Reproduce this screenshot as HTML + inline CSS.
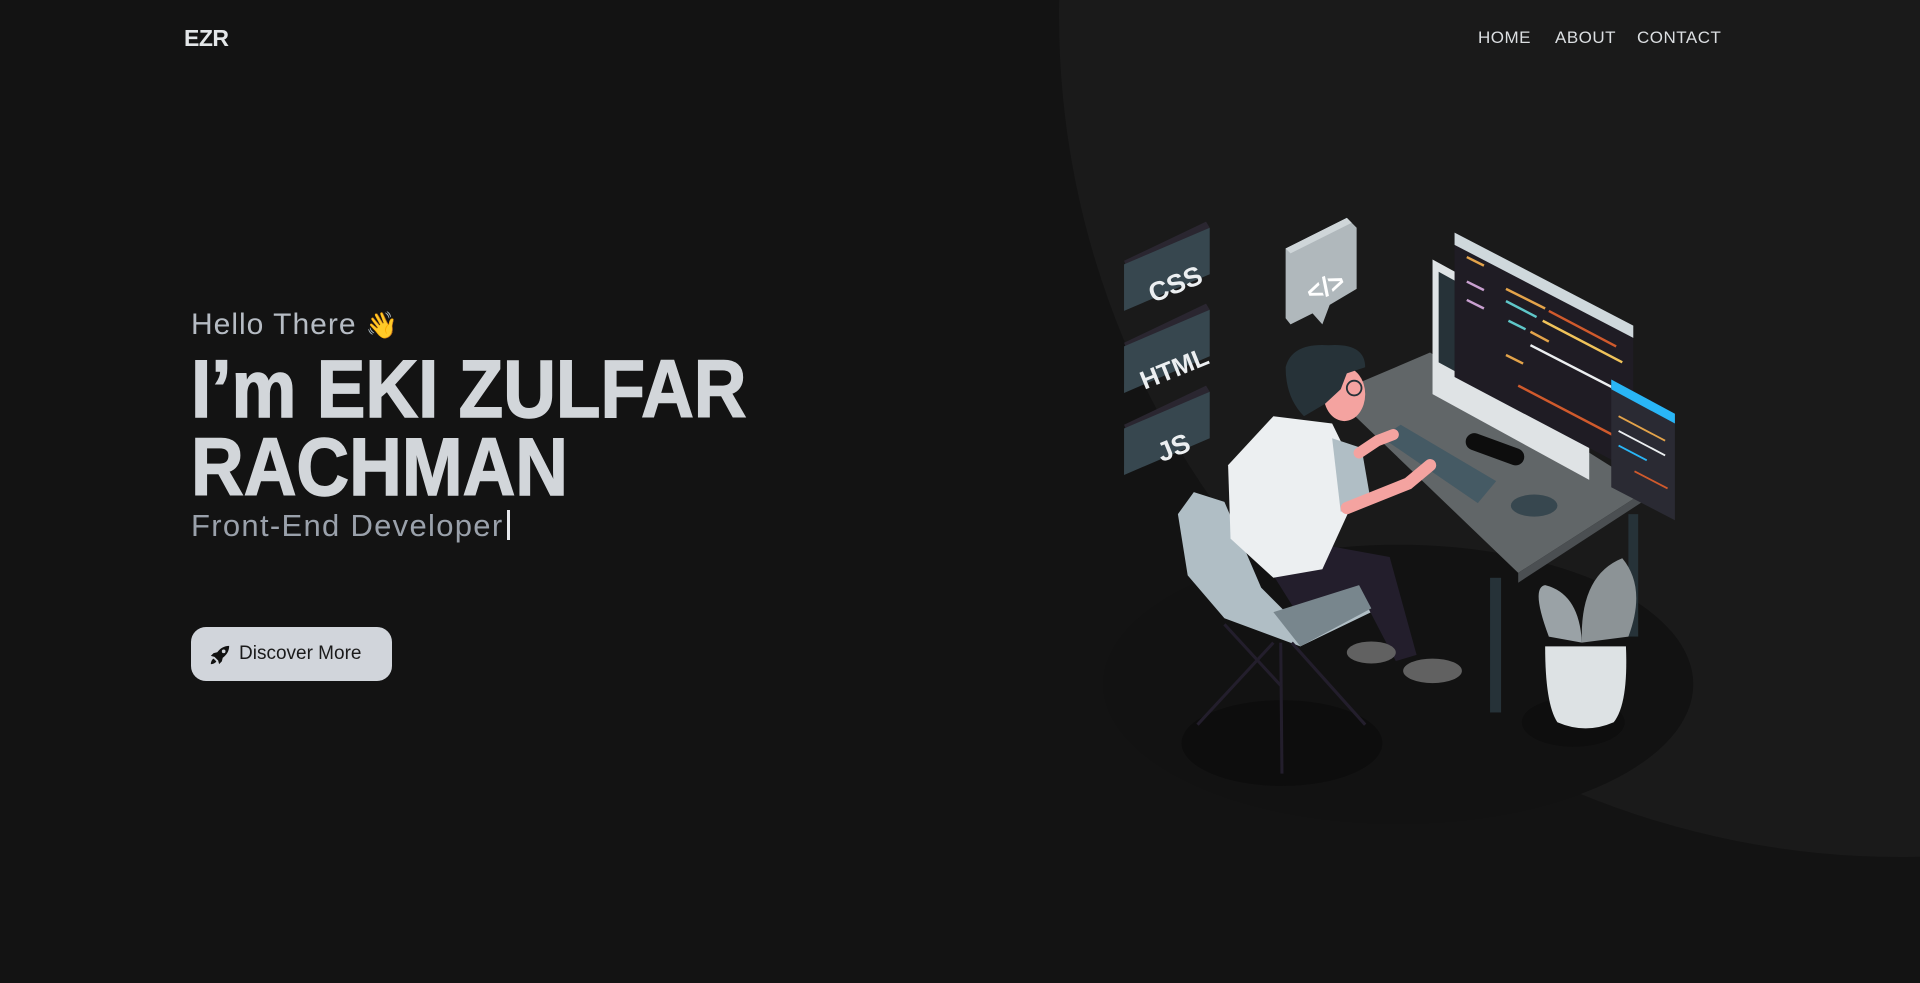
<!DOCTYPE html>
<html><head><meta charset="utf-8"><style>
html,body{margin:0;padding:0;width:1920px;height:983px;overflow:hidden;background:#131313;font-family:"Liberation Sans",sans-serif}
.circle{position:absolute;left:1059px;top:-825px;width:1682px;height:1682px;border-radius:50%;background:#1a1a1a}
svg.art{position:absolute;left:0;top:0}
.logo{position:absolute;left:184px;top:25px;font-size:23px;font-weight:bold;color:#e3e6e8;letter-spacing:-0.5px}
.nav{position:absolute;top:28px;font-size:17px;color:#dcdfe2;letter-spacing:0.5px}
.hello{position:absolute;left:191px;top:308px;font-size:30px;color:#b6bcc4;white-space:nowrap;letter-spacing:1px}
.h1{position:absolute;left:191px;font-size:82px;font-weight:bold;color:#d2d6da;white-space:nowrap;transform-origin:0 0;transform:scaleX(0.89);line-height:1;-webkit-text-stroke:1.5px #d2d6da}
.role{position:absolute;left:191px;top:508px;font-size:31px;color:#9aa1ab;white-space:nowrap;letter-spacing:1.3px}
.cursor{display:inline-block;width:3px;height:30px;background:#e5e7eb;vertical-align:-4px;margin-left:4px}
.btn{position:absolute;left:191px;top:627px;width:201px;height:54px;border-radius:15px;background:#d1d5db;color:#1b1b1b;font-size:19px;line-height:54px}
.btn span{position:absolute;left:48px}
</style></head><body>
<div class="circle"></div>
<svg class="art" width="1920" height="983" viewBox="0 0 1568 803">
<ellipse cx="1142" cy="559" rx="241" ry="114" fill="#121212"/>
<ellipse cx="1047" cy="607" rx="82" ry="35" fill="#0d0d0d"/>
<ellipse cx="1285" cy="590" rx="42" ry="20" fill="#0e0e0e"/>
<g>
<polygon points="918,213 985,181 988,186 920,218" fill="#2a2630"/>
<polygon points="918,216 988,186 988,224 918,254" fill="#37474f"/>
<text x="936" y="242" transform="rotate(-22 953 230)" fill="#eceff1" font-weight="bold" font-size="22" font-family="Liberation Sans">CSS</text>
<polygon points="918,280 985,248 988,253 920,285" fill="#2a2630"/>
<polygon points="918,283 988,253 988,291 918,321" fill="#37474f"/>
<text x="928" y="310" transform="rotate(-22 953 297)" fill="#eceff1" font-weight="bold" font-size="21" font-family="Liberation Sans">HTML</text>
<polygon points="918,347 985,315 988,320 920,352" fill="#2a2630"/>
<polygon points="918,350 988,320 988,358 918,388" fill="#37474f"/>
<text x="944" y="375" transform="rotate(-22 953 364)" fill="#eceff1" font-weight="bold" font-size="22" font-family="Liberation Sans">JS</text>
</g>
<polygon points="1050,203 1100,178 1108,186 1108,236 1086,249 1080,265 1072,256 1054,265 1050,260" fill="#b0b8bc"/>
<polygon points="1050,203 1100,178 1104,182 1054,207" fill="#cfd6d9"/>
<text x="1064" y="243" transform="rotate(-22 1078 228)" fill="#fff" font-weight="bold" font-size="22" font-family="Liberation Sans">&lt;/&gt;</text>
<polygon points="1088,322 1168,288 1346,400 1240,468" fill="#616668"/>
<polygon points="1240,468 1346,400 1346,407 1240,476" fill="#4b4f52"/>
<rect x="1217" y="472" width="9" height="110" fill="#263238"/>
<rect x="1330" y="420" width="8" height="100" fill="#263238"/>
<polygon points="1170,212 1298,282 1298,392 1170,322" fill="#dfe3e5"/>
<polygon points="1175,222 1293,287 1293,360 1175,296" fill="#263238"/>
<polygon points="1188,190 1334,266 1334,385 1188,308" fill="#1f1c24"/>
<polygon points="1188,190 1334,266 1334,276 1188,200" fill="#cfd8dc"/>
<g stroke-width="2">
<line x1="1230" y1="236" x2="1262" y2="252" stroke="#e3a34a"/><line x1="1265" y1="254" x2="1320" y2="283" stroke="#d05a2c"/>
<line x1="1230" y1="246" x2="1255" y2="259" stroke="#5fc7c9"/><line x1="1260" y1="262" x2="1325" y2="296" stroke="#f0c35a"/>
<line x1="1232" y1="262" x2="1246" y2="269" stroke="#5fc7c9"/><line x1="1250" y1="271" x2="1265" y2="279" stroke="#e3a34a"/>
<line x1="1250" y1="282" x2="1320" y2="318" stroke="#eceff1"/>
<line x1="1230" y1="290" x2="1244" y2="297" stroke="#e3a34a"/><line x1="1240" y1="315" x2="1330" y2="362" stroke="#d05a2c"/>
<line x1="1198" y1="210" x2="1212" y2="217" stroke="#e3a34a"/><line x1="1198" y1="230" x2="1212" y2="237" stroke="#c9a0d0"/><line x1="1198" y1="245" x2="1212" y2="252" stroke="#c9a0d0"/>
</g>
<rect x="1196" y="360" width="50" height="14" rx="7" fill="#0d0d0d" transform="rotate(20 1221 367)"/>
<polygon points="1316,310 1368,338 1368,425 1316,398" fill="#2a2a33"/>
<polygon points="1316,310 1368,338 1368,346 1316,318" fill="#29b6f6"/>
<g stroke-width="1.5"><line x1="1322" y1="340" x2="1360" y2="360" stroke="#e3a34a"/><line x1="1322" y1="352" x2="1360" y2="372" stroke="#eceff1"/><line x1="1322" y1="364" x2="1345" y2="376" stroke="#29b6f6"/><line x1="1335" y1="385" x2="1362" y2="399" stroke="#d05a2c"/></g>
<polygon points="1128,357 1144,347 1222,393 1207,411" fill="#455a64"/>
<ellipse cx="1253" cy="413" rx="19" ry="9" fill="#37474f"/>
<polygon points="962,420 975,402 1000,410 1030,480 1060,510 1110,485 1120,500 1062,528 1000,505 970,470" fill="#b0bec5"/>
<g stroke="#231e2c" stroke-width="2.5"><line x1="1040" y1="525" x2="978" y2="592"/><line x1="1046" y1="525" x2="1047" y2="632"/><line x1="1055" y1="525" x2="1115" y2="592"/><line x1="1000" y1="510" x2="1046" y2="560"/></g>
<polygon points="1040,470 1080,445 1135,455 1157,535 1140,540 1115,492 1060,502" fill="#231e2c"/>
<ellipse cx="1170" cy="548" rx="24" ry="10" fill="#616161"/>
<ellipse cx="1120" cy="533" rx="20" ry="9" fill="#616161"/>
<polygon points="1003,380 1040,340 1088,346 1112,395 1080,465 1040,472 1005,440" fill="#eceff1"/>
<polygon points="1088,358 1112,366 1120,412 1095,418" fill="#b0bec5"/>
<path d="M1100,415 L1150,395 L1168,380" stroke="#f4a3a0" stroke-width="10" fill="none" stroke-linecap="round"/>
<path d="M1110,370 L1125,360 L1138,355" stroke="#f4a3a0" stroke-width="9" fill="none" stroke-linecap="round"/>
<ellipse cx="1098" cy="322" rx="17" ry="22" fill="#f4a3a0"/>
<path d="M1050,300 Q1055,280 1085,282 Q1115,280 1115,300 L1100,305 L1095,318 L1082,330 L1065,340 Q1050,325 1050,300Z" fill="#263238"/>
<circle cx="1106" cy="317" r="6" fill="none" stroke="#263238" stroke-width="1.5"/>
<polygon points="1040,500 1110,478 1120,497 1062,528" fill="#78868d"/>
<path d="M1262,528 L1328,528 Q1330,575 1318,590 Q1295,600 1272,590 Q1262,575 1262,528Z" fill="#dde2e4"/>
<path d="M1265,520 Q1250,480 1262,478 Q1290,485 1292,525Z" fill="#9aa2a6"/>
<path d="M1292,525 Q1290,470 1325,456 Q1345,480 1330,520Z" fill="#8c9396"/>
</svg>
<div class="logo">EZR</div>
<div class="nav" style="left:1478px">HOME</div>
<div class="nav" style="left:1555px">ABOUT</div>
<div class="nav" style="left:1637px">CONTACT</div>
<div class="hello">Hello There <span style="font-size:26px">👋</span></div>
<div class="h1" style="top:349px">I’m EKI ZULFAR</div>
<div class="h1" style="top:427px">RACHMAN</div>
<div class="role">Front-End Developer<span class="cursor"></span></div>
<div class="btn"><svg style="position:absolute;left:18px;top:17px" width="22" height="22" viewBox="0 0 24 24"><path d="M22 2c-6 0-10 3-13 7l-4 1-3 3 4 1 4 4 1 4 3-3 1-4c4-3 7-7 7-13zM16 6a2 2 0 1 1 0 4a2 2 0 0 1 0-4zM5 16c-2 1-3 4-3 6 2 0 5-1 6-3z" fill="#111"/></svg><span>Discover More</span></div>
</body></html>
